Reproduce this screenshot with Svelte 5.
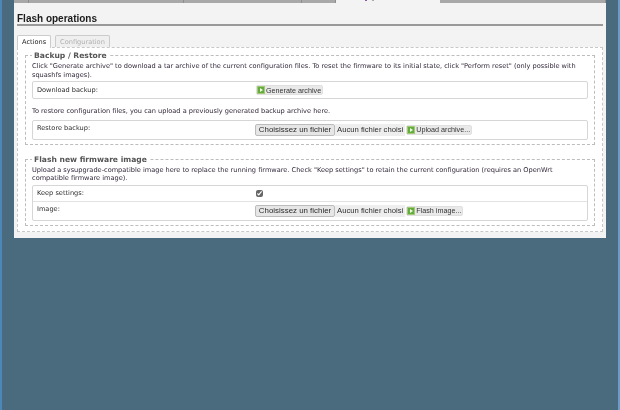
<script>
    const topTabs = [
        { w: 15 },
        { w: 155 },
        { w: 118 },
        { w: 34 },
        { w: 104, active: true },
        { w: 166 },
    ];
</script>

{#snippet applyIcon()}
    <svg width="8" height="8" viewBox="0 0 8 8">
        <rect x="0.5" y="0.5" width="7" height="7" fill="#62ad3c" stroke="#a3c878" />
        <polygon points="3,2 6,4 3,6" fill="#f2f7e6" />
    </svg>
{/snippet}

<div class="page">
    <div class="main">
        <nav class="toptabs">
            {#each topTabs as t}
                <div class="toptab" class:active={t.active} style="width: {t.w}px">
                    {#if t.active}<i class="dot purple"></i><i class="dot"></i>{/if}
                </div>
            {/each}
        </nav>
        <div class="content">
            <h2>Flash operations</h2>
            <ul class="tabs">
                <li class="current">Actions</li>
                <li class="off">Configuration</li>
            </ul>
            <div class="tabbody">
                <fieldset class="first">
                    <legend>Backup / Restore</legend>
                    <p class="descr">Click "Generate archive" to download a tar archive of the current configuration files. To reset the firmware to its initial state, click "Perform reset" (only possible with squashfs images).</p>
                    <div class="box">
                        <div class="row plain">
                            <span class="label">Download backup:</span>
                            <div class="field"><button class="apply">{@render applyIcon()}Generate archive</button></div>
                        </div>
                    </div>
                    <p class="descr mid">To restore configuration files, you can upload a previously generated backup archive here.</p>
                    <div class="box">
                        <div class="row tall">
                            <span class="label">Restore backup:</span>
                            <div class="field">
                                <span class="choose">Choisissez un fichier</span><span class="none">Aucun fichier choisi</span>
                                <button class="apply">{@render applyIcon()}Upload archive...</button>
                            </div>
                        </div>
                    </div>
                </fieldset>
                <fieldset>
                    <legend>Flash new firmware image</legend>
                    <p class="descr">Upload a sysupgrade-compatible image here to replace the running firmware. Check "Keep settings" to retain the current configuration (requires an OpenWrt compatible firmware image).</p>
                    <div class="box">
                        <div class="row check">
                            <span class="label">Keep settings:</span>
                            <div class="field"><input type="checkbox" checked /></div>
                        </div>
                        <div class="row tall">
                            <span class="label">Image:</span>
                            <div class="field">
                                <span class="choose">Choisissez un fichier</span><span class="none">Aucun fichier choisi</span>
                                <button class="apply">{@render applyIcon()}Flash image...</button>
                            </div>
                        </div>
                    </div>
                </fieldset>
            </div>
        </div>
    </div>
</div>

<style>
    :global(body) {
        margin: 0;
        background: #4a6b7e;
    }
    .page {
        height: 410px;
        box-sizing: border-box;
        border-left: 2px solid #4d86b8;
        border-right: 2px solid #6a9cc8;
        padding: 0 12px;
        font-family: "DejaVu Sans", Verdana, sans-serif;
        font-size: 6.6px;
        color: #2e2e2e;
        overflow: hidden;
    }
    .main {
        background: #f3f3f3;
        height: 238px;
        filter: blur(0.25px);
    }
    .toptabs {
        display: flex;
        height: 3px;
        background: #a8a8a8;
        overflow: hidden;
    }
    .toptab {
        box-sizing: border-box;
        border-right: 1px solid #8e8e8e;
    }
    .toptab.active {
        display: flex;
        gap: 5px;
        padding-left: 29px;
        background: #f3f3f3;
        border: 0;
    }
    .dot {
        width: 2px;
        height: 1px;
        background: #aaa;
    }
    .dot.purple {
        background: #8a5aa0;
    }
    .content {
        padding: 0 3px;
    }
    h2 {
        margin: 0;
        padding-top: 9px;
        height: 12px;
        font-family: "Liberation Sans", Arial, sans-serif;
        font-size: 10px;
        line-height: 13px;
        font-weight: bold;
        color: #1c1c1c;
        border-bottom: 2px solid #999;
    }
    .tabs {
        list-style: none;
        display: flex;
        gap: 4px;
        margin: 9px 0 0 0;
        padding: 0;
        height: 12px;
        position: relative;
        z-index: 1;
    }
    .tabs li {
        box-sizing: border-box;
        height: 12px;
        line-height: 13px;
        padding: 0 4px;
        border: 1px solid #ccc;
        border-bottom: 0;
        border-radius: 2px 2px 0 0;
    }
    .tabs .current {
        background: #fff;
        height: 13px;
        color: #222;
    }
    .tabs .off {
        color: #b0b0b0;
        background: #efefef;
    }
    .tabbody {
        box-sizing: border-box;
        height: 185px;
        border: 1px dashed #c8c8c8;
        background: #fff;
        padding: 3px 7px 0;
    }
    fieldset {
        margin: 0;
        padding: 0 6px 4px;
        border: 1px dashed #bdbdbd;
        min-width: 0;
    }
    fieldset.first {
        margin-bottom: 10px;
    }
    legend {
        font-size: 7.6px;
        line-height: 9px;
        font-weight: bold;
        color: #555;
        padding: 0 2px;
    }
    .descr {
        margin: 2px 0 0;
        line-height: 8.5px;
        color: #33283a;
    }
    .descr.mid {
        margin: 8px 0 4px;
    }
    .box {
        margin-top: 2px;
        border: 1px solid #d6d6d6;
        border-radius: 2px;
    }
    .descr.mid + .box {
        margin-top: 0;
    }
    .row {
        display: flex;
        align-items: center;
        padding: 0 4px;
    }
    .row.plain {
        height: 16px;
    }
    .row.tall {
        height: 18px;
    }
    .row.check {
        height: 15px;
        border-bottom: 1px solid #e2e2e2;
    }
    .label {
        width: 218px;
        flex: none;
        margin-bottom: 3px;
    }
    .row.plain .label,
    .row.check .label {
        margin-bottom: 0;
    }
    .field {
        display: flex;
        align-items: center;
        font-family: "Liberation Sans", Arial, sans-serif;
    }
    button {
        font: inherit;
        padding: 0;
        margin: 0;
    }
    .apply {
        display: inline-flex;
        align-items: center;
        gap: 1px;
        height: 10px;
        box-sizing: border-box;
        border: 1px solid #e0e0e0;
        border-radius: 2px;
        background: #e9e9e9;
        color: #333;
        padding: 0 1px 0 0;
        font-size: 7.2px;
        white-space: nowrap;
        margin-left: 1px;
    }
    .choose {
        box-sizing: border-box;
        width: 80px;
        height: 12px;
        line-height: 10px;
        text-align: center;
        white-space: nowrap;
        border: 1px solid #bcbcbc;
        border-radius: 2px;
        background: #e6e6e6;
        color: #2a2a2a;
        font-size: 7.9px;
    }
    .none {
        height: 12px;
        line-height: 12px;
        padding: 0 2px;
        white-space: nowrap;
        background: #eeeeee;
        color: #2e2e2e;
        font-size: 7.7px;
    }
    input[type="checkbox"] {
        margin: 0 0 0 1px;
        width: 7px;
        height: 7px;
        accent-color: #666;
    }
</style>
